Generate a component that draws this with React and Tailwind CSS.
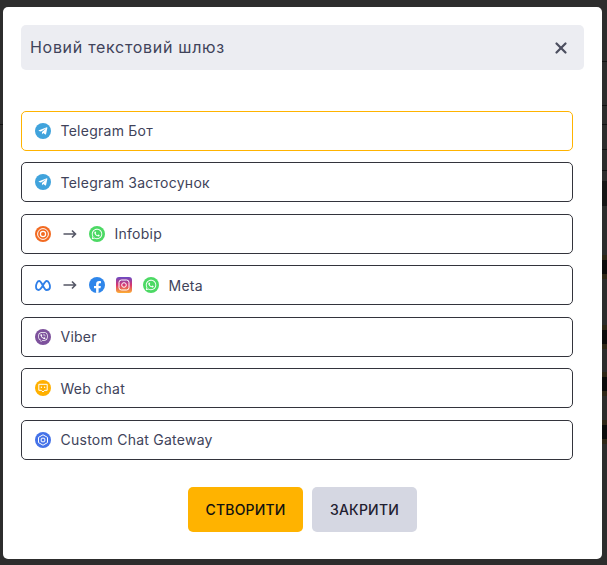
import React from "react";
import { FaTelegramPlane, FaWhatsapp, FaFacebookF, FaViber } from "react-icons/fa";
import { FiX } from "react-icons/fi";

const font = "font-['Inter','Liberation_Sans',sans-serif]";

const Telegram = () => (
  <span className="flex h-[16px] w-[16px] items-center justify-center rounded-full bg-[#40a3dc]">
    <FaTelegramPlane className="-ml-px h-[10px] w-[10px] text-white" />
  </span>
);

const WhatsApp = () => (
  <span className="flex h-[16px] w-[16px] items-center justify-center rounded-full bg-[#4cd964]">
    <FaWhatsapp className="h-[12px] w-[12px] text-white" />
  </span>
);

const Facebook = () => (
  <span className="flex h-[16px] w-[16px] items-end justify-center overflow-hidden rounded-full bg-[#2f86ea]">
    <FaFacebookF className="ml-px h-[13px] w-[13px] translate-y-[1px] text-white" />
  </span>
);

const Viber = () => (
  <span className="flex h-[16px] w-[16px] items-center justify-center rounded-full bg-[#7d519c]">
    <FaViber className="h-[10px] w-[10px] text-white" />
  </span>
);

const Infobip = () => (
  <svg width="16" height="16" viewBox="0 0 16 16">
    <circle cx="8" cy="8" r="8" fill="#f26a21" />
    <circle cx="8" cy="8" r="5.4" fill="none" stroke="#fff" strokeWidth="1" />
    <circle cx="8" cy="8" r="2.6" fill="none" stroke="#fff" strokeWidth="1.2" />
  </svg>
);

const MetaLogo = () => (
  <svg width="16" height="11" viewBox="0 0 16 11" fill="none">
    <path
      d="M1 7c0-3 1.400-6 3.200-6 2.600 0 4.600 9 7.200 9C13.400 10 15 9 15 7c0-3-1.500-6-3.400-6C9 1 7 10 3.600 10 2 10 1 8.800 1 7Z"
      stroke="#2f7fe8"
      strokeWidth="1.8"
    />
  </svg>
);

const Instagram = () => (
  <svg width="16" height="16" viewBox="0 0 16 16" fill="none">
    <defs>
      <linearGradient id="ig" x1="0" y1="0" x2="0" y2="1">
        <stop offset="0" stopColor="#6a4bc4" />
        <stop offset="0.5" stopColor="#d9346f" />
        <stop offset="1" stopColor="#fdb032" />
      </linearGradient>
    </defs>
    <rect width="16" height="16" rx="3" fill="url(#ig)" />
    <rect x="3" y="3" width="10" height="10" rx="2.400" stroke="#fff" strokeWidth="1" />
    <circle cx="8" cy="8" r="2.300" stroke="#fff" strokeWidth="1" />
  </svg>
);

const WebChat = () => (
  <svg width="16" height="16" viewBox="0 0 16 16">
    <circle cx="8" cy="8" r="8" fill="#ffb000" />
    <path d="M3.800 4.300h8.400v6H9.700L8 12l-1.700-1.700H3.800Z" fill="none" stroke="#fff" strokeWidth="1" />
    <circle cx="6.400" cy="7.300" r=".7" fill="#fff" />
    <circle cx="9.600" cy="7.300" r=".7" fill="#fff" />
  </svg>
);

const Gateway = () => (
  <svg width="16" height="16" viewBox="0 0 16 16">
    <circle cx="8" cy="8" r="8" fill="#4472e8" />
    <path d="M8 2.800 12.500 5.400v5.200L8 13.200 3.500 10.600V5.400Z" fill="none" stroke="#fff" strokeWidth="1" />
    <rect x="6.200" y="6.200" width="3.600" height="3.600" rx=".8" fill="none" stroke="#fff" strokeWidth="1" />
  </svg>
);

const Arrow = () => (
  <svg width="14" height="10" viewBox="0 0 14 10" fill="none" className="mx-px">
    <path d="M0.500 5H12.500M9 1.500 12.500 5 9 8.500" stroke="#555766" strokeWidth="1.600" />
  </svg>
);

const gateways = [
  { name: "Telegram Бот", icons: [<Telegram key="t" />], active: true },
  { name: "Telegram Застосунок", icons: [<Telegram key="t" />] },
  { name: "Infobip", icons: [<Infobip key="i" />, <Arrow key="a" />, <WhatsApp key="w" />] },
  {
    name: "Meta",
    icons: [<MetaLogo key="m" />, <Arrow key="a" />, <Facebook key="f" />, <Instagram key="g" />, <WhatsApp key="w" />],
  },
  { name: "Viber", icons: [<Viber key="v" />] },
  { name: "Web chat", icons: [<WebChat key="c" />] },
  { name: "Custom Chat Gateway", icons: [<Gateway key="g" />] },
];

// dimmed page showing beside the modal
const Line = () => <div className="h-px bg-[#121212]" />;
const Band = () => (
  <div className="flex flex-col">
    <div className="h-[5px] bg-[#2f2818]" />
    <div className="h-[14px] bg-[#0c0c0c]" />
    <div className="h-[5px] bg-[#2f2818]" />
  </div>
);

const App = () => {
  return (
    <div className={`flex h-[565px] w-[607px] overflow-hidden bg-[#2d2d2d] ${font}`}>
      <div className="flex w-[3px] shrink-0 flex-col">
        <div className="h-[124px]" />
        <Line />
      </div>

      {/* Modal */}
      <div className="mt-[7px] flex h-[552px] w-[599px] shrink-0 flex-col rounded-[5px] bg-white px-[18px] pt-[18px]">
        <div className="flex h-[45px] w-[563px] items-center justify-between rounded-[5px] bg-[#ecedf2] pl-[9px] pr-[14px]">
          <h2 className="-translate-y-px text-[16px] font-normal tracking-[0.7px] text-[#40435a]">Новий текстовий шлюз</h2>
          <FiX className="h-[18px] w-[18px] text-[#4c4f60]" strokeWidth={3} />
        </div>

        {/* Gateway list */}
        <div className="mt-[40.7px] flex w-[552px] flex-col gap-[11.5px]">
          {gateways.map((g) => (
            <div
              key={g.name}
              className={`flex h-[40px] items-center rounded-[5px] border pl-[13px] ${
                g.active ? "border-[#ffb300]" : "border-[#33343c]"
              }`}
            >
              <div className="flex items-center gap-[11px]">{g.icons}</div>
              <span className="ml-[9.5px] text-[14px] tracking-[0.25px] text-[#40435a]">{g.name}</span>
            </div>
          ))}
        </div>

        <div className="mt-[27px] flex justify-center gap-[9px]">
          <button className="h-[45px] w-[115px] rounded-[5px] bg-[#ffb300] text-[14px] font-medium tracking-[0.15px] text-[#111]">
            СТВОРИТИ
          </button>
          <button className="h-[45px] w-[105px] rounded-[5px] bg-[#d5d7e2] text-[14px] font-medium tracking-[0.2px] text-[#1f2030]">
            ЗАКРИТИ
          </button>
        </div>
      </div>

      <div className="flex w-[5px] shrink-0 flex-col">
        <div className="h-[61px]" />
        <Line />
        <div className="h-[43px]" />
        <Line />
        <div className="h-[18px]" />
        <Line />
        <div className="h-[24px]" />
        <Line />
        <div className="h-[20px]" />
        <Line />
        <div className="h-[10px]" />
        <div className="h-[25px] bg-[#161616]" />
        <div className="h-[49px]" />
        <Band />
        <div className="h-[46px]" />
        <Band />
        <div className="h-[23px]" />
        <Band />
        <div className="h-[24px]" />
        <Band />
      </div>
    </div>
  );
};

export default App;
